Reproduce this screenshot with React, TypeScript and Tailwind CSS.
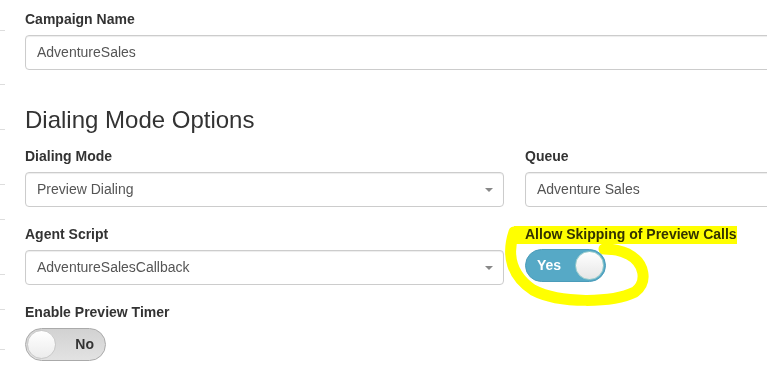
const font = "font-['Liberation_Sans',Arial,sans-serif]";

function Label({ children }: { children: string }) {
  return <div className="h-5 text-[14px] font-bold leading-5 text-[#333]">{children}</div>;
}

function TextBox({ value, select }: { value: string; select?: boolean }) {
  return (
    <div className="mt-[6px] flex h-[35px] items-center justify-between rounded border border-[#ccc] bg-white pl-[11px] pr-[10px] text-[14px] text-[#555] shadow-[inset_0_1px_1px_rgba(0,0,0,0.075)]">
      <span>{value}</span>
      {select && (
        <span className="h-0 w-0 border-x-[4px] border-t-[4px] border-x-transparent border-t-[#888]" />
      )}
    </div>
  );
}

function Toggle({ on }: { on: boolean }) {
  if (on) {
    return (
      <div className="mt-[5px] flex h-[33px] w-[81px] items-center justify-between rounded-full border border-[#4a9cba] bg-[#56a9c6] pl-[11px] pr-px">
        <span className="text-[14px] font-bold text-white">Yes</span>
        <span className="h-[29px] w-[29px] rounded-full border border-[#9cc] bg-gradient-to-b from-white to-[#e6e6e6]" />
      </div>
    );
  }
  return (
    <div className="mt-[6px] flex h-[33px] w-[81px] items-center justify-between rounded-full border border-[#aaa] bg-gradient-to-b from-[#d2d2d2] to-[#e2e2e2] pl-px pr-[11px]">
      <span className="h-[29px] w-[29px] rounded-full border border-[#c8c8c8] bg-gradient-to-b from-white to-[#ececec]" />
      <span className="text-[14px] font-bold text-[#333]">No</span>
    </div>
  );
}

function Highlight() {
  return (
    <svg
      className="pointer-events-none absolute left-0 top-0 mix-blend-multiply"
      width="767"
      height="382"
      viewBox="0 0 767 382"
    >
      <g fill="none" stroke="#ffff00" strokeLinejoin="round">
        <path d="M514,235 L737,235" strokeWidth="18" />
        <path
          d="M514,232 C506,256 512,276 533,290 C560,304 612,303 635,292 C648,282 645,263 628,254 C620,250 612,249 604,249"
          strokeWidth="11"
          strokeLinecap="round"
        />
      </g>
    </svg>
  );
}

export default function App() {
  const ticks = [31, 54, 45, 55, 35, 55, 35, 40];
  return (
    <div className={`relative h-[382px] w-[767px] overflow-hidden bg-white ${font}`}>
      <div className="flex">
        <div className="flex w-[25px] shrink-0 flex-col">
          {ticks.map((t, i) => (
            <div key={i} className="h-px w-[5px] bg-[#ddd]" style={{ marginTop: t - 1 }} />
          ))}
        </div>
        <div className="w-[1000px] shrink-0 pt-[9px]">
          <Label>Campaign Name</Label>
          <div className="mt-[1px]">
            <TextBox value="AdventureSales" />
          </div>
          <h2 className="mt-[37px] h-[26px] text-[24px] leading-[26px] text-[#333]">Dialing Mode Options</h2>
          <div className="mt-[13px] grid grid-cols-[479px_479px] gap-x-[21px] gap-y-[17px]">
            <div>
              <Label>Dialing Mode</Label>
              <TextBox value="Preview Dialing" select />
            </div>
            <div>
              <Label>Queue</Label>
              <TextBox value="Adventure Sales" />
            </div>
            <div>
              <Label>Agent Script</Label>
              <TextBox value="AdventureSalesCallback" select />
            </div>
            <div>
              <Label>Allow Skipping of Preview Calls</Label>
              <Toggle on />
            </div>
          </div>
          <div className="mt-[17px]">
            <Label>Enable Preview Timer</Label>
            <Toggle on={false} />
          </div>
        </div>
      </div>
      <Highlight />
    </div>
  );
}
